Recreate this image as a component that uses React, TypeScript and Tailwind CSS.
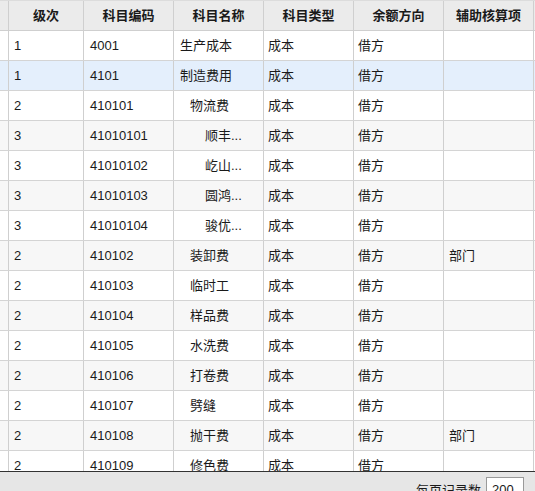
import React from "react";

type Row = { lv: string; code: string; name: string; indent: number; type: string; dir: string; aux: string };

const rows: Row[] = [
  { lv: "1", code: "4001", name: "生产成本", indent: 0, type: "成本", dir: "借方", aux: "" },
  { lv: "1", code: "4101", name: "制造费用", indent: 0, type: "成本", dir: "借方", aux: "" },
  { lv: "2", code: "410101", name: "物流费", indent: 1, type: "成本", dir: "借方", aux: "" },
  { lv: "3", code: "41010101", name: "顺丰...", indent: 2, type: "成本", dir: "借方", aux: "" },
  { lv: "3", code: "41010102", name: "屹山...", indent: 2, type: "成本", dir: "借方", aux: "" },
  { lv: "3", code: "41010103", name: "圆鸿...", indent: 2, type: "成本", dir: "借方", aux: "" },
  { lv: "3", code: "41010104", name: "骏优...", indent: 2, type: "成本", dir: "借方", aux: "" },
  { lv: "2", code: "410102", name: "装卸费", indent: 1, type: "成本", dir: "借方", aux: "部门" },
  { lv: "2", code: "410103", name: "临时工", indent: 1, type: "成本", dir: "借方", aux: "" },
  { lv: "2", code: "410104", name: "样品费", indent: 1, type: "成本", dir: "借方", aux: "" },
  { lv: "2", code: "410105", name: "水洗费", indent: 1, type: "成本", dir: "借方", aux: "" },
  { lv: "2", code: "410106", name: "打卷费", indent: 1, type: "成本", dir: "借方", aux: "" },
  { lv: "2", code: "410107", name: "劈缝", indent: 1, type: "成本", dir: "借方", aux: "" },
  { lv: "2", code: "410108", name: "抛干费", indent: 1, type: "成本", dir: "借方", aux: "部门" },
  { lv: "2", code: "410109", name: "修色费", indent: 1, type: "成本", dir: "借方", aux: "" },
];

const font = { fontFamily: '"Liberation Sans", "Noto Sans CJK SC", sans-serif' };

export default function App() {
  return (
    <div className="w-[535px] h-[491px] flex flex-col bg-white overflow-hidden text-[#1a1a1a]" style={font}>
      <div className="h-[471px] shrink-0 overflow-hidden">
        {/* header */}
        <div className="flex h-[31px] border-t border-t-[#dcdcdc] border-b border-b-[#cfcfcf] bg-[#ebebeb] text-[13px] font-bold">
          <div className="w-[9px] shrink-0 border-r border-r-[#cfcfcf]" />
          <div className="w-[75px] shrink-0 border-r border-r-[#cfcfcf] flex items-center justify-center">级次</div>
          {["科目编码", "科目名称", "科目类型", "余额方向", "辅助核算项"].map((h) => (
            <div key={h} className="w-[90px] shrink-0 border-r border-r-[#cfcfcf] flex items-center justify-center">
              {h}
            </div>
          ))}
        </div>
        {rows.map((r, i) => {
          const bg = i === 1 ? "bg-[#e4effc]" : i % 2 === 1 ? "bg-[#f7f7f7]" : "bg-white";
          const pad = r.indent === 0 ? "pl-[6px]" : r.indent === 1 ? "pl-[16px]" : "pl-[31px]";
          return (
            <div key={r.code} className={`flex h-[30px] shrink-0 border-b border-b-[#d4d4d4] text-[13px] ${bg}`}>
              <div className="w-[9px] shrink-0 border-r border-r-[#cfcfcf]" />
              <div className="w-[75px] shrink-0 border-r border-r-[#cfcfcf] flex items-center pl-[5px]">{r.lv}</div>
              <div className="w-[90px] shrink-0 border-r border-r-[#cfcfcf] flex items-center pl-[6px]">{r.code}</div>
              <div className={`w-[90px] shrink-0 border-r border-r-[#cfcfcf] flex items-center ${pad} whitespace-nowrap`}>{r.name}</div>
              <div className="w-[90px] shrink-0 border-r border-r-[#cfcfcf] flex items-center pl-[4px]">{r.type}</div>
              <div className="w-[90px] shrink-0 border-r border-r-[#cfcfcf] flex items-center pl-[4px]">{r.dir}</div>
              <div className="w-[90px] shrink-0 border-r border-r-[#cfcfcf] flex items-center pl-[5px]">{r.aux}</div>
            </div>
          );
        })}
      </div>
      <div className="h-[20px] shrink-0 border-t border-t-[#333] bg-[#e6e6e6] flex items-start justify-end pr-[11px] pt-[5px] text-[13px]">
        <span className="mt-[6px] mr-[5px] leading-[15px] whitespace-nowrap">每页记录数</span>
        <div className="w-[38px] h-[22px] shrink-0 border border-[#9a9a9a] bg-white pl-[5px] pt-[4px] leading-[15px]">200</div>
      </div>
    </div>
  );
}
